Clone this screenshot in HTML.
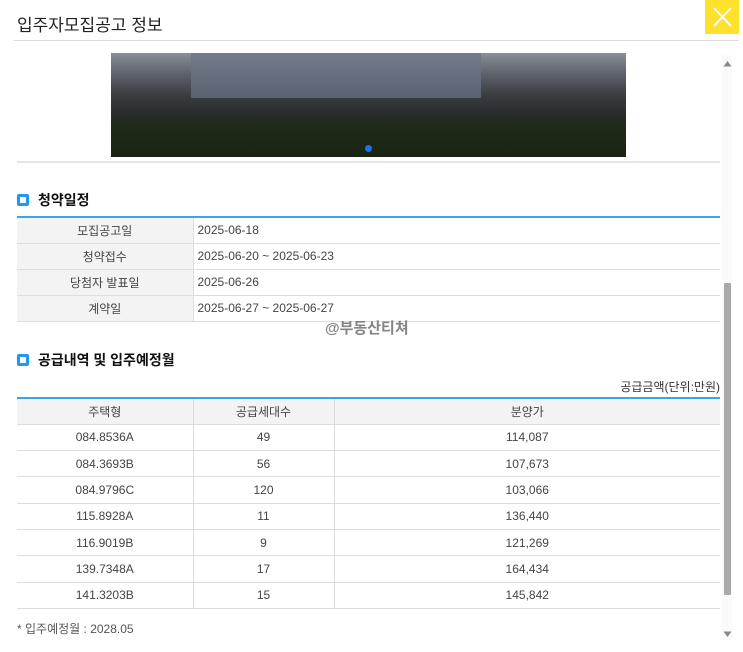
<!DOCTYPE html>
<html><head><meta charset="utf-8"><style>
*,*:before{margin:0;padding:0;box-sizing:border-box}
body{width:743px;height:652px;background:#fff;font-family:"Liberation Sans","Noto Sans CJK KR",sans-serif;color:#333;position:relative;overflow:hidden}
.title{position:absolute;left:17px;top:11px;font-size:17px;color:#222}
.close{position:absolute;left:705px;top:0;width:34px;height:34px;background:#fde12d}
.hline{position:absolute;left:13px;width:726px;height:1px;background:#ddd}
.img{position:absolute;left:111px;top:53px;width:515px;height:104px;background:linear-gradient(180deg,#8a8e96 0%,#5e636c 20%,#3a3e40 40%,#2b2f30 55%,#1f2a18 70%,#1a2414 100%)}
.h2{position:absolute;left:17px;font-size:14px;font-weight:bold;color:#111}
.h2:before{content:"";display:inline-block;width:12px;height:12px;border:3px solid #2196f3;border-radius:2px;margin-right:9px;vertical-align:-1px}
table{position:absolute;left:17px;width:703px;border-collapse:collapse;font-size:12px;border-top:2px solid #3ea3ee}
td{height:26px;border-bottom:1px solid #ddd;color:#444}
.k{background:#f3f3f3;text-align:center;width:176px;border-right:1px solid #ddd}
.v{padding-left:4px}
.t2 td{text-align:center;border-right:1px solid #ddd;height:26.3px}
.t2 tr:first-child td{background:#f3f3f3}
.sb{position:absolute;left:722px;top:55px;width:10px;height:585px;background:#fafafa}
.thumb{position:absolute;left:724px;top:283px;width:7px;height:312px;background:#a9a9a9;border-radius:1px}
</style></head><body>
<div class="title">입주자모집공고 정보</div>
<div class="close"><svg width="34" height="34"><path d="M9 8L26 26M26 8L9 26" stroke="#fff" stroke-width="2"/></svg></div>
<div class="hline" style="top:40px"></div>
<div class="img"><div style="position:absolute;left:80px;top:0;width:290px;height:45px;background:#6a7588;opacity:.7"></div><div style="position:absolute;left:254px;top:92px;width:7px;height:7px;border-radius:50%;background:#1a73e8"></div></div>
<div class="hline" style="top:161px;left:17px;width:703px;background:#e5e5e5;height:2px"></div>
<div class="sb"></div><div class="thumb"></div>
<svg style="position:absolute;left:723px;top:60px" width="9" height="7"><path d="M0.5 6.5L4.5 1L8.5 6.5Z" fill="#888"/></svg>
<svg style="position:absolute;left:723px;top:631px" width="9" height="7"><path d="M0.5 0.5L4.5 6L8.5 0.5Z" fill="#888"/></svg>
<div class="h2" style="top:190px">청약일정</div>
<table style="top:216px">
<tr><td class="k">모집공고일</td><td class="v">2025-06-18</td></tr>
<tr><td class="k">청약접수</td><td class="v">2025-06-20 ~ 2025-06-23</td></tr>
<tr><td class="k">당첨자 발표일</td><td class="v">2025-06-26</td></tr>
<tr><td class="k">계약일</td><td class="v">2025-06-27 ~ 2025-06-27</td></tr>
</table>
<div style="position:absolute;left:325px;top:317px;font-size:15px;color:#666;font-weight:bold;opacity:.8">@부동산티쳐</div>
<div class="h2" style="top:350px">공급내역 및 입주예정월</div>
<div style="position:absolute;right:23px;top:378px;font-size:12px;color:#333">공급금액(단위:만원)</div>
<table class="t2" style="top:397px">
<tr><td style="width:176px">주택형</td><td style="width:141px">공급세대수</td><td style="border-right:0">분양가</td></tr>
<tr><td>084.8536A</td><td>49</td><td style="border-right:0">114,087</td></tr>
<tr><td>084.3693B</td><td>56</td><td style="border-right:0">107,673</td></tr>
<tr><td>084.9796C</td><td>120</td><td style="border-right:0">103,066</td></tr>
<tr><td>115.8928A</td><td>11</td><td style="border-right:0">136,440</td></tr>
<tr><td>116.9019B</td><td>9</td><td style="border-right:0">121,269</td></tr>
<tr><td>139.7348A</td><td>17</td><td style="border-right:0">164,434</td></tr>
<tr><td>141.3203B</td><td>15</td><td style="border-right:0">145,842</td></tr>
</table>
<div style="position:absolute;left:17px;top:620px;font-size:12px;color:#555">* 입주예정월 : 2028.05</div>
</body></html>
